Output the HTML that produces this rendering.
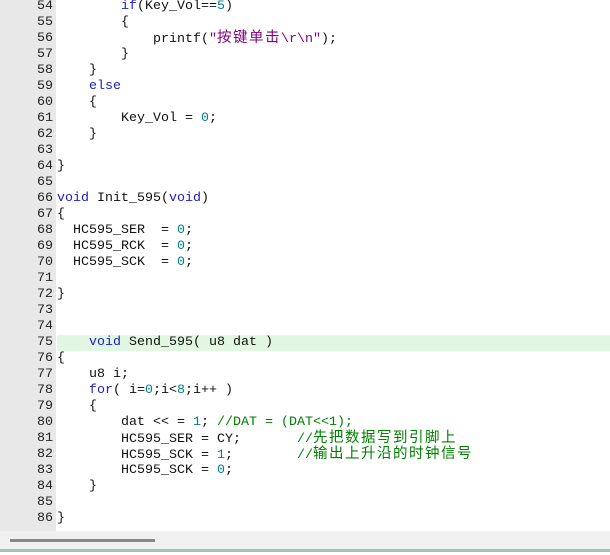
<!DOCTYPE html>
<html><head><meta charset="utf-8"><style>
html,body{margin:0;padding:0;background:#fff;width:610px;height:555px;overflow:hidden;position:relative}
.g{position:absolute;left:0;top:0;width:56px;height:531px;background:#e8e8e8}
.w{position:absolute;left:0;top:2px;width:610px;height:529px}
.l{position:absolute;left:0;height:16px;width:610px;font:13.33px/16px "Liberation Mono","Noto Sans CJK SC",monospace;color:#111;white-space:pre}
.n{position:absolute;left:0;width:53px;text-align:right;color:#222}
.c{position:absolute;left:57px}
.k{color:#2020c0}.d{color:#008080}.s{color:#800080}.m{color:#008000}
.z{font-size:14.5px;letter-spacing:1.5px}
.hl{position:absolute;left:57px;top:333px;width:553px;height:16px;background:#e2f7e2}
.sb{position:absolute;left:0;top:531px;width:610px;height:18px;background:#f0f0f0}
.th{position:absolute;left:10px;top:539px;width:145px;height:3px;background:#888}
.bb{position:absolute;left:0;top:549px;width:610px;height:3px;background:#a3c2b5}
</style></head><body>
<div class="g"></div>
<div class="w">
<div class="hl"></div>
<div class="l" style="top:-3px"><span class="n">54</span><span class="c">        <span class="k">if</span>(Key_Vol==<span class="d">5</span>)</span></div>
<div class="l" style="top:13px"><span class="n">55</span><span class="c">        {</span></div>
<div class="l" style="top:29px"><span class="n">56</span><span class="c">            printf(<span class="s">"<span class="z">按键单击</span>\r\n"</span>);</span></div>
<div class="l" style="top:45px"><span class="n">57</span><span class="c">        }</span></div>
<div class="l" style="top:61px"><span class="n">58</span><span class="c">    }</span></div>
<div class="l" style="top:77px"><span class="n">59</span><span class="c">    <span class="k">else</span></span></div>
<div class="l" style="top:93px"><span class="n">60</span><span class="c">    {</span></div>
<div class="l" style="top:109px"><span class="n">61</span><span class="c">        Key_Vol = <span class="d">0</span>;</span></div>
<div class="l" style="top:125px"><span class="n">62</span><span class="c">    }</span></div>
<div class="l" style="top:141px"><span class="n">63</span></div>
<div class="l" style="top:157px"><span class="n">64</span><span class="c">}</span></div>
<div class="l" style="top:173px"><span class="n">65</span></div>
<div class="l" style="top:189px"><span class="n">66</span><span class="c"><span class="k">void</span> Init_595(<span class="k">void</span>)</span></div>
<div class="l" style="top:205px"><span class="n">67</span><span class="c">{</span></div>
<div class="l" style="top:221px"><span class="n">68</span><span class="c">  HC595_SER  = <span class="d">0</span>;</span></div>
<div class="l" style="top:237px"><span class="n">69</span><span class="c">  HC595_RCK  = <span class="d">0</span>;</span></div>
<div class="l" style="top:253px"><span class="n">70</span><span class="c">  HC595_SCK  = <span class="d">0</span>;</span></div>
<div class="l" style="top:269px"><span class="n">71</span></div>
<div class="l" style="top:285px"><span class="n">72</span><span class="c">}</span></div>
<div class="l" style="top:301px"><span class="n">73</span></div>
<div class="l" style="top:317px"><span class="n">74</span></div>
<div class="l" style="top:333px"><span class="n">75</span><span class="c">    <span class="k">void</span> Send_595( u8 dat )</span></div>
<div class="l" style="top:349px"><span class="n">76</span><span class="c">{</span></div>
<div class="l" style="top:365px"><span class="n">77</span><span class="c">    u8 i;</span></div>
<div class="l" style="top:381px"><span class="n">78</span><span class="c">    <span class="k">for</span>( i=<span class="d">0</span>;i&lt;<span class="d">8</span>;i++ )</span></div>
<div class="l" style="top:397px"><span class="n">79</span><span class="c">    {</span></div>
<div class="l" style="top:413px"><span class="n">80</span><span class="c">        dat &lt;&lt; = <span class="d">1</span>; <span class="m">//DAT = (DAT&lt;&lt;1);</span></span></div>
<div class="l" style="top:429px"><span class="n">81</span><span class="c">        HC595_SER = CY;       <span class="m">//<span class="z">先把数据写到引脚上</span></span></span></div>
<div class="l" style="top:445px"><span class="n">82</span><span class="c">        HC595_SCK = <span class="d">1</span>;        <span class="m">//<span class="z">输出上升沿的时钟信号</span></span></span></div>
<div class="l" style="top:461px"><span class="n">83</span><span class="c">        HC595_SCK = <span class="d">0</span>;</span></div>
<div class="l" style="top:477px"><span class="n">84</span><span class="c">    }</span></div>
<div class="l" style="top:493px"><span class="n">85</span></div>
<div class="l" style="top:509px"><span class="n">86</span><span class="c">}</span></div>
</div>
<div class="sb"></div><div class="th"></div><div class="bb"></div>
</body></html>
